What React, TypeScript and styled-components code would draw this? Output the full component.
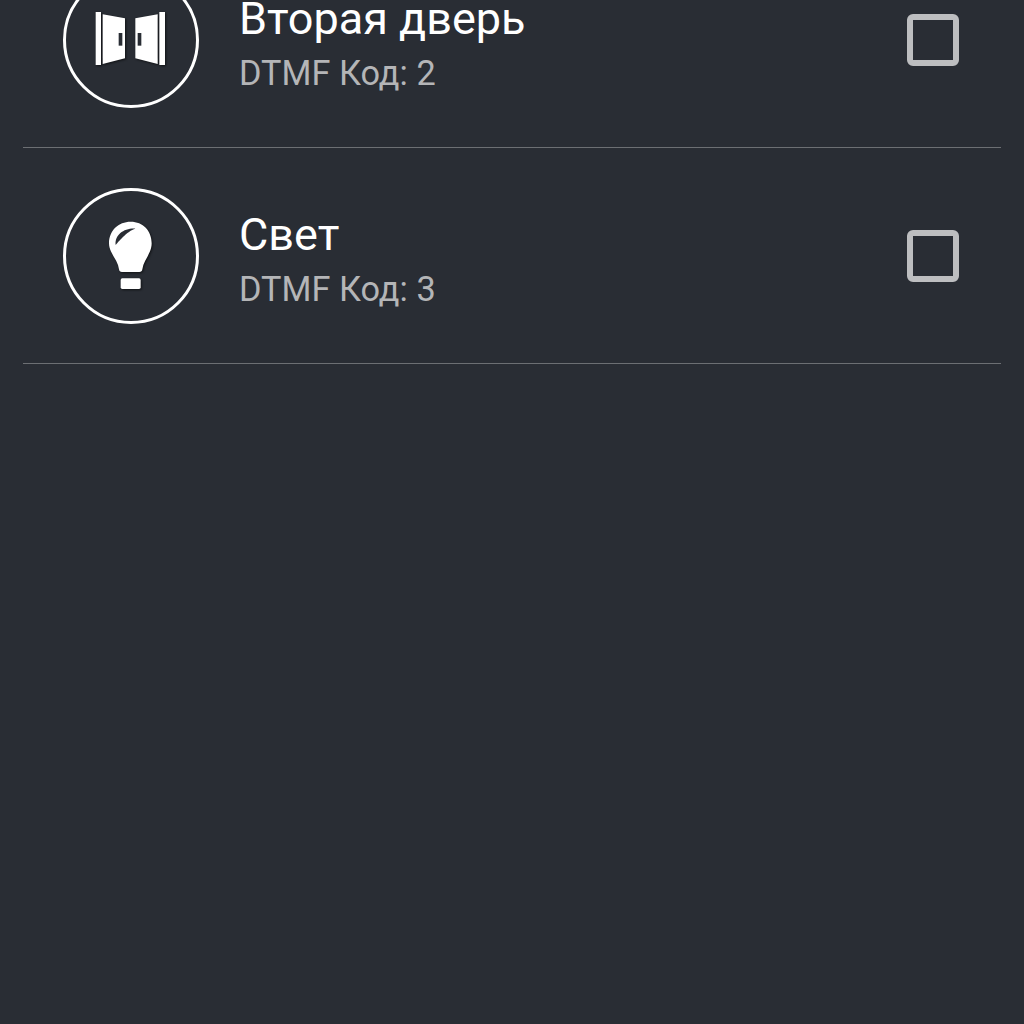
import styled, { createGlobalStyle } from "styled-components";

const GlobalStyle = createGlobalStyle`
  html, body {
    margin: 0;
    height: 100%;
    background: #292d34;
    overflow: hidden;
  }
`;

function DoorsIcon() {
  return (
    <GlyphSvg width={76} height={60} viewBox="129 30 228 180">
      <path d="M137 36h16v159h-16z" fill="#fff" />
      <path d="M158 43l67 12v120l-67 17z" fill="#fff" />
      <path d="M206 99h11v38h-11z" fill="#292d34" />
      <path d="M328 36h17v159h-17z" fill="#fff" />
      <path d="M323 43l-67 12v120l67 17z" fill="#fff" />
      <path d="M263 99h11v38h-11z" fill="#292d34" />
    </GlyphSvg>
  );
}

function BulbIcon() {
  return (
    <GlyphSvg width={76} height={80} viewBox="129 108 228 240">
      <path
        d="M242 125C205 125 177 152 177 190C177 215 196 232 204 255L207 268Q208 276 216 276L268 276Q276 276 277 268L280 255C289 232 305 215 305 190C305 152 279 125 242 125Z"
        fill="#fff"
      />
      <path d="M197 195C194 165 222 144 256 146C232 152 201 190 197 195Z" fill="#292d34" />
      <rect x={212} y={295} width={60} height={32} rx={5} fill="#fff" />
    </GlyphSvg>
  );
}

const items = [
  { title: "Вторая дверь", code: 2, icon: <DoorsIcon /> },
  { title: "Свет", code: 3, icon: <BulbIcon /> },
];

export default function App() {
  return (
    <>
      <GlobalStyle />
      <List>
        {items.map((item) => (
          <Row key={item.code}>
            <IconCircle>{item.icon}</IconCircle>
            <Texts>
              <Title>{item.title}</Title>
              <Code>DTMF Код: {item.code}</Code>
            </Texts>
            <Checkbox />
          </Row>
        ))}
      </List>
    </>
  );
}

const List = styled.div`
  margin: -68px 23px 0;
  font-family: Roboto, "Noto Sans", sans-serif;
`;

const Row = styled.div`
  display: flex;
  align-items: center;
  height: 215px;
  padding: 0 42px 0 40px;
  box-sizing: content-box;
  border-bottom: 1px solid #6c6f73;
`;

const IconCircle = styled.div`
  flex: none;
  display: flex;
  align-items: center;
  justify-content: center;
  width: 136px;
  height: 136px;
  box-sizing: border-box;
  border: 3px solid #fff;
  border-radius: 50%;
`;

const GlyphSvg = styled.svg`
  display: block;
  filter: drop-shadow(1px 1px 1px rgba(0, 0, 0, 0.6));
`;

const Texts = styled.div`
  flex: 1;
  display: flex;
  flex-direction: column;
  margin-left: 40px;
  padding-top: 8px;
`;

const Title = styled.div`
  font-size: 45px;
  line-height: 50px;
  color: #fff;
`;

const Code = styled.div`
  font-size: 34.3px;
  line-height: 42px;
  margin-top: 8px;
  color: #b4b5b7;
`;

const Checkbox = styled.div`
  flex: none;
  width: 52px;
  height: 52px;
  box-sizing: border-box;
  border: 6px solid #bdbec0;
  border-radius: 6px;
`;
